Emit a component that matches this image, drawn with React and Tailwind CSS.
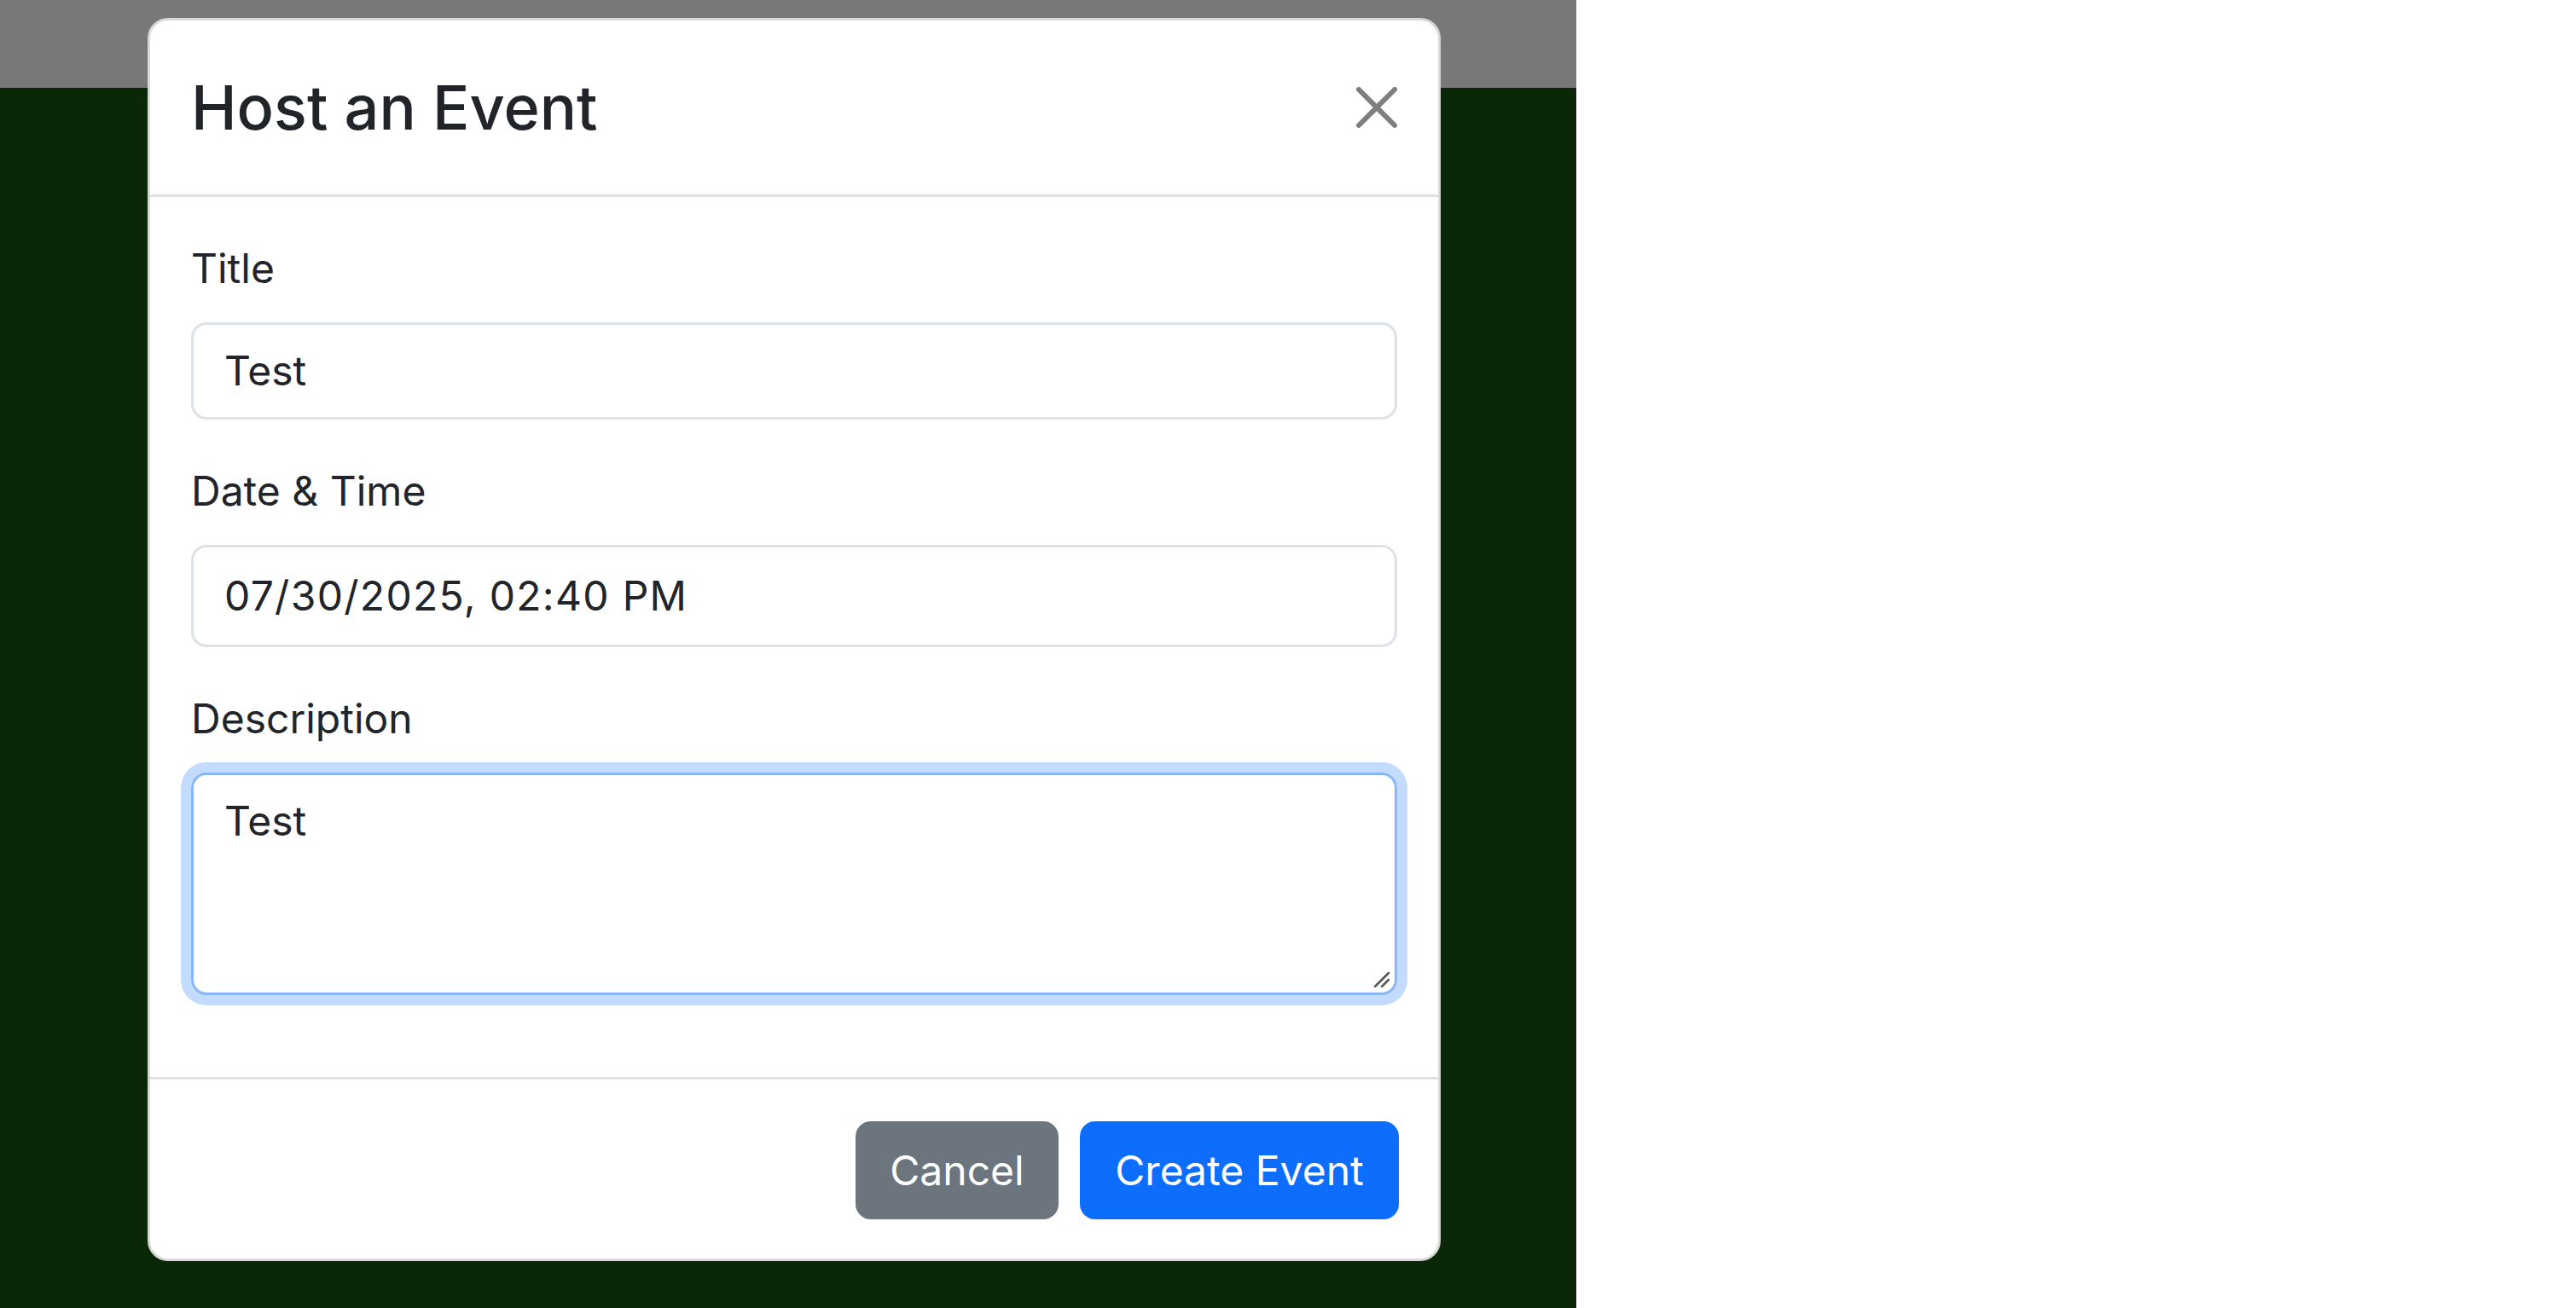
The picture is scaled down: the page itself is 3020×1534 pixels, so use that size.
import React from "react";

const font = { fontFamily: "Inter, 'Liberation Sans', sans-serif" };

function Grip() {
  return (
    <svg className="absolute right-[6px] bottom-[6px]" width="20" height="20" viewBox="0 0 20 20">
      <line x1="19" y1="3" x2="3" y2="19" stroke="#555" strokeWidth="2.5" strokeLinecap="round" />
      <line x1="19" y1="11" x2="11" y2="19" stroke="#555" strokeWidth="2.5" strokeLinecap="round" />
    </svg>
  );
}

function CloseIcon() {
  return (
    <svg width="48" height="48" viewBox="0 0 16 16" fill="#000" className="opacity-50">
      <path d="M.293.293a1 1 0 0 1 1.414 0L8 6.586 14.293.293a1 1 0 1 1 1.414 1.414L9.414 8l6.293 6.293a1 1 0 0 1-1.414 1.414L8 9.414l-6.293 6.293a1 1 0 0 1-1.414-1.414L6.586 8 .293 1.707a1 1 0 0 1 0-1.414z" />
    </svg>
  );
}

export default function App() {
  return (
    <div className="flex w-[3020px] h-[1534px] bg-white overflow-hidden" style={font}>
      <div className="relative w-[1848px] h-[1534px] flex flex-col">
        <div className="h-[103px] bg-[#787878]" />
        <div className="flex-1 bg-[#0a2808]" />

        <div className="absolute left-[173px] top-[21px] w-[1516px] bg-white rounded-[24px] border-[3px] border-black/15 flex flex-col text-[#212529]">
          <div className="flex items-center justify-between px-[48px] py-[48px] border-b-[3px] border-[#dee2e6]">
            <div className="text-[72px] leading-[108px] font-medium">Host an Event</div>
            <CloseIcon />
          </div>

          <div className="flex flex-col px-[48px] pt-[48px] pb-[48px]">
            <div className="flex flex-col mb-[48px]">
              <div className="text-[48px] leading-[72px] mb-[27px]">Title</div>
              <div className="h-[114px] border-[3px] border-[#dee2e6] rounded-[18px] px-[36px] flex items-center text-[48px]">
                Test
              </div>
            </div>

            <div className="flex flex-col mb-[48px]">
              <div className="text-[48px] leading-[72px] mb-[27px]">Date &amp; Time</div>
              <div className="h-[120px] border-[3px] border-[#dee2e6] rounded-[18px] px-[36px] flex items-center text-[48px] tracking-[1.3px]">
                07/30/2025, 02:40 PM
              </div>
            </div>

            <div className="flex flex-col mb-[48px]">
              <div className="text-[48px] leading-[72px] mb-[27px]">Description</div>
              <div className="relative h-[261px] border-[3px] border-[#86b7fe] rounded-[18px] px-[36px] py-[18px] text-[48px] leading-[72px] ring-[12px] ring-[#c2dbfe]">
                Test
                <Grip />
              </div>
            </div>
          </div>

          <div className="flex justify-end gap-[25px] border-t-[3px] border-[#dee2e6] pt-[49px] pb-[46px] pr-[46px]">
            <div className="w-[238px] h-[115px] rounded-[18px] bg-[#6c757d] text-white text-[48px] flex items-center justify-center">
              Cancel
            </div>
            <div className="w-[374px] h-[115px] rounded-[18px] bg-[#0d6efd] text-white text-[48px] flex items-center justify-center">
              Create Event
            </div>
          </div>
        </div>
      </div>
      <div className="flex-1 bg-white" />
    </div>
  );
}
